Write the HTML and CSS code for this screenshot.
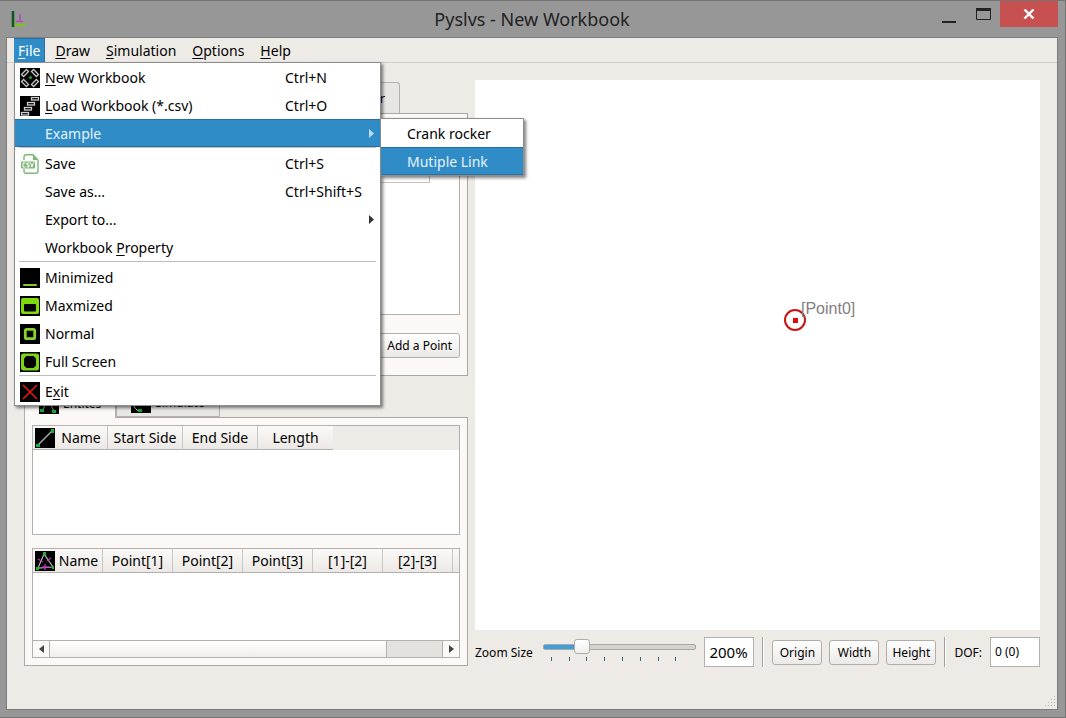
FILE: index.html
```html
<!DOCTYPE html>
<html lang="en">
<head>
<meta charset="utf-8">
<title>Pyslvs - New Workbook</title>
<link rel="stylesheet" href="styles.css">
</head>
<body>
<div class="window">
  <header class="titlebar">
    <svg class="app-icon" width="18" height="18" viewBox="0 0 18 18"><path d="M2 15H15" stroke="#7fc41c" stroke-width="2.4"/><path d="M3 1V17" stroke="#0f5a1c" stroke-width="2.6"/><path d="M10 4V11M6 11.5H13" stroke="#b04fae" stroke-width="1.6"/></svg>
    <h1 class="title">Pyslvs - New Workbook</h1>
    <div class="window-buttons">
      <button class="win-btn" aria-label="Minimize"><svg width="14" height="18"><path d="M0 17H14" stroke="#222" stroke-width="2"/></svg></button>
      <button class="win-btn" aria-label="Maximize"><svg width="15" height="12"><path d="M.5 0V11.5H14.500V0" fill="none" stroke="#222"/><path d="M0 1.500H15" stroke="#222" stroke-width="3"/></svg></button>
      <button class="win-btn win-close" aria-label="Close"><svg width="12" height="10"><path d="M1.500 .5L10.500 9.500M10.500 .5L1.500 9.500" stroke="#fff" stroke-width="2.400"/></svg></button>
    </div>
  </header>

  <div class="client">
    <nav class="menubar">
      <div class="menu-root">
        <button class="menu-title open"><u>F</u>ile</button>
        <div class="menu file-menu">
          <button class="item"><svg class="ico" viewBox="0 0 20 20"><rect width="20" height="20"/><g fill="none" stroke="#c4c4c4" stroke-width="1.300"><rect x="-3.500" y="-1.500" width="7" height="3" transform="translate(5 5) rotate(-45)"/><rect x="-3.500" y="-1.500" width="7" height="3" transform="translate(15 5) rotate(45)"/><rect x="-3.500" y="-1.500" width="7" height="3" transform="translate(5 15) rotate(45)"/><rect x="-3.500" y="-1.500" width="7" height="3" transform="translate(15 15) rotate(-45)"/></g><circle cx="10.500" cy="9.500" r="1.500" fill="#1ca52c"/></svg><span><u>N</u>ew Workbook</span><kbd>Ctrl+N</kbd></button>
          <button class="item"><svg class="ico" viewBox="0 0 20 20"><rect width="20" height="20"/><g fill="none" stroke="#d0d0d0" stroke-width="1.300"><rect x="11.500" y="1.500" width="7" height="2.500"/><rect x="7.500" y="6.500" width="7" height="2.500"/><rect x="4.500" y="11.500" width="7" height="2.500"/><rect x="1.500" y="16.500" width="7" height="2.500"/></g></svg><span><u>L</u>oad Workbook (*.csv)</span><kbd>Ctrl+O</kbd></button>
          <div class="sub-root">
            <button class="item selected"><span class="ico"></span><span>Example</span><svg class="arrow" viewBox="0 0 5 9"><path d="M0 0L5 4.500L0 9Z" fill="currentColor"/></svg></button>
            <div class="menu submenu">
              <button class="item">Crank rocker</button>
              <button class="item selected">Mutiple Link</button>
            </div>
          </div>
          <hr>
          <button class="item"><svg class="ico" viewBox="0 0 20 20"><path d="M4 6V3Q4 .8 6 .8H13L18 6V17Q18 19.200 16 19.200H6Q4 19.200 4 17V15" fill="#fff" stroke="#7fb876" stroke-width="1.400"/><path d="M13 1V6H18Z" fill="#7fb876"/><rect x="1" y="7.500" width="14" height="7" rx="1" fill="#7fb876"/><path d="M5.500 9H3V13H5.500M9.500 9H7V11H9V13H6.800M10.500 8.500L12 13L13.500 8.500" fill="none" stroke="#fff"/></svg><span>Save</span><kbd>Ctrl+S</kbd></button>
          <button class="item"><span class="ico"></span><span>Save as...</span><kbd>Ctrl+Shift+S</kbd></button>
          <button class="item"><span class="ico"></span><span>Export to...</span><svg class="arrow" viewBox="0 0 5 9"><path d="M0 0L5 4.500L0 9Z" fill="currentColor"/></svg></button>
          <button class="item"><span class="ico"></span><span>Workbook <u>P</u>roperty</span></button>
          <hr>
          <button class="item"><svg class="ico" viewBox="0 0 20 20"><rect width="20" height="20"/><path d="M4 17H16" stroke="#86c92c" stroke-width="2.200" stroke-linecap="round"/></svg><span>Minimized</span></button>
          <button class="item"><svg class="ico" viewBox="0 0 20 20"><rect width="20" height="20"/><rect x="1" y="2" width="18" height="16" rx="2" fill="#7ddb0c"/><rect x="4" y="8" width="12" height="7.500" rx="1"/></svg><span>Maxmized</span></button>
          <button class="item"><svg class="ico" viewBox="0 0 20 20"><rect width="20" height="20"/><rect x="5.300" y="5.300" width="9.400" height="9.400" rx="1.500" fill="none" stroke="#86d32c" stroke-width="2.800"/></svg><span>Normal</span></button>
          <button class="item"><svg class="ico" viewBox="0 0 20 20"><rect width="20" height="20"/><rect x="1" y="1.500" width="18" height="17" rx="2.500" fill="#7bd31c"/><path d="M6.500 4H13.500L16 6.500V13.500L13.500 16H6.500L4 13.500V6.500Z"/></svg><span>Full Screen</span></button>
          <hr>
          <button class="item"><svg class="ico" viewBox="0 0 20 20"><rect width="20" height="20"/><path d="M3 3L17 17M17 3L3 17" stroke="#e01818" stroke-width="1.700"/></svg><span>E<u>x</u>it</span></button>
        </div>
      </div>
      <button class="menu-title"><u>D</u>raw</button>
      <button class="menu-title"><u>S</u>imulation</button>
      <button class="menu-title"><u>O</u>ptions</button>
      <button class="menu-title"><u>H</u>elp</button>
    </nav>

    <main class="main">
      <section class="side">
        <div class="tabs upper-tabs"><button class="tab">r</button></div>
        <div class="pane upper-pane">
          <div class="grid-box points"><div class="points-head"></div></div>
          <div class="pane-actions"><button class="btn">Add a Point</button></div>
        </div>

        <div class="tabs lower-tabs">
          <button class="tab active"><svg class="ico" viewBox="0 0 20 20"><rect width="20" height="20"/><path d="M3 17L9 6L15 17" fill="none" stroke="#aaa"/><path d="M1 15h4v3h-4zM13 16h4v3h-4z" fill="#1ca52c"/></svg><span>Entites</span></button>
          <button class="tab"><svg class="ico" viewBox="0 0 20 20"><rect width="20" height="20"/><path d="M2 10Q3 17 9 18" fill="none" stroke="#ccc"/><path d="M7 16h4v3h-4z" fill="#1ca52c"/></svg><span>Simulate</span></button>
        </div>
        <div class="pane lower-pane">
          <div class="grid-box lines">
            <table class="grid grid-lines">
              <thead><tr>
                <th><div class="cell"><svg class="ico" viewBox="0 0 20 20"><rect width="20" height="20"/><path d="M3 17L17 3" stroke="#b5b5b5" stroke-width="1.200"/><path d="M1 16h4v3h-4zM16 1h3v4h-3z" fill="#1cb52c"/></svg><span>Name</span></div></th>
                <th>Start Side</th><th>End Side</th><th>Length</th>
              </tr></thead>
            </table>
          </div>
          <div class="grid-box chains">
            <table class="grid grid-chains">
              <thead><tr>
                <th><div class="cell"><svg class="ico" viewBox="0 0 20 20"><rect width="20" height="20"/><path d="M9 3L3 17L18 16Z" fill="none" stroke="#b5b5b5" stroke-width="1.200"/><path d="M3 8L8 11M12 10L16 7M10 13V19M7 16H14" stroke="#b838b8" stroke-width="1.300"/><path d="M8 1h3v3h-3zM1 16h3v3h-3zM17 15h2v3h-2z" fill="#1cb52c"/></svg><span>Name</span></div></th>
                <th>Point[1]</th><th>Point[2]</th><th>Point[3]</th><th>[1]-[2]</th><th>[2]-[3]</th><th class="rest"></th>
              </tr></thead>
            </table>
            <div class="scrollbar">
              <button class="scroll-btn" aria-label="Scroll left"><svg width="5" height="8"><path d="M5 0L0 4L5 8Z" fill="#444"/></svg></button>
              <div class="scroll-track"><div class="scroll-thumb"></div></div>
              <button class="scroll-btn right" aria-label="Scroll right"><svg width="5" height="8"><path d="M0 0L5 4L0 8Z" fill="#444"/></svg></button>
            </div>
          </div>
        </div>
      </section>

      <section class="view">
        <div class="canvas">
          <div class="point">
            <svg width="22" height="22" viewBox="0 0 22 22"><circle cx="11" cy="11" r="10" fill="none" stroke="#c81414" stroke-width="2"/><rect x="9" y="9" width="5" height="5" fill="#d80c0c"/></svg>
            <span class="point-label">[Point0]</span>
          </div>
        </div>
        <div class="controls">
          <label for="zoom">Zoom Size</label>
          <div class="slider">
            <input id="zoom" type="range" min="0" max="800" value="180">
            <div class="ticks"><i></i><i></i><i></i><i></i><i></i><i></i><i></i><i></i></div>
          </div>
          <input class="field zoom-field" value="200%" aria-label="Zoom value">
          <div class="divider"></div>
          <div class="btn-group">
            <button class="btn">Origin</button>
            <button class="btn">Width</button>
            <button class="btn">Height</button>
          </div>
          <div class="divider"></div>
          <label for="dof">DOF:</label>
          <input class="field dof-field" id="dof" value="0 (0)">
        </div>
      </section>
    </main>
    <svg class="grip" width="12" height="12" viewBox="0 0 12 12" fill="none" stroke="#b4b2ae"><path d="M10.500 0V12" stroke-dasharray="1 2"/><path d="M7.500 3V12" stroke-dasharray="1 2"/><path d="M4.500 6V12" stroke-dasharray="1 2"/><path d="M1.500 9V12" stroke-dasharray="1 2"/></svg>
  </div>
</div>
</body>
</html>
```

FILE: styles.css
```css
* { box-sizing: border-box; }
body {
  margin: 0;
  font: 14px/20px "Noto Sans", "Open Sans", sans-serif;
  color: #000;
}
button, input { font: inherit; color: inherit; margin: 0; }
button { padding: 0; border: 0; background: none; }
svg { display: block; flex: none; }

/* window frame */
.window {
  min-height: 100vh;
  display: flex;
  flex-direction: column;
  padding: 0 7px 7px 6px;
  background: #979797;
  border: 1px solid #747474;
  border-left: 0;
}
.titlebar {
  height: 36px;
  display: grid;
  grid-template-columns: 1fr auto 1fr;
  align-items: center;
}
.app-icon { margin-left: 4px; }
.title { margin: 0; font-size: 18px; line-height: 24px; font-weight: 400; color: #222; }
.window-buttons { align-self: start; justify-self: end; display: flex; }
.win-btn { width: 34px; height: 26px; display: flex; align-items: center; justify-content: center; }
.win-close { width: 58px; background: #c75050; }

/* client area */
.client {
  position: relative;
  flex: 1;
  display: flex;
  flex-direction: column;
  background: #eeebe7;
  border: 1px solid #7c7c7c;
}
.menubar { display: flex; gap: 2px; height: 25px; padding-left: 7px; border-bottom: 1px solid #d2cfcb; }
.menu-root, .sub-root { position: relative; }
.menu-root { margin-right: 1px; }
.menu-title { display: block; height: 25px; padding: 0 5px; }
.menubar > .menu-title { padding: 0 7px; }
.menu-title.open { padding: 0 4px; color: #fff; background: #308cc6; border: 1px solid #2a6f9f; border-width: 1px 1px 0 0; }
.menu-title u, .item u { text-underline-offset: 2px; }

.menu {
  position: absolute;
  z-index: 2;
  display: flex;
  flex-direction: column;
  background: #fff;
  border: 1px solid #8e8e8e;
  box-shadow: 2px 2px 3px rgba(0, 0, 0, .5);
}
.file-menu { top: 24px; left: 0; width: 367px; }
.submenu { top: -1px; left: 365px; width: 144px; }
.item {
  display: flex;
  align-items: center;
  width: 100%;
  height: 28px;
  padding: 1px 5px 0;
  gap: 5px;
  text-align: left;
}
.item.selected { color: #e6f3fb; background: #308cc6; box-shadow: inset 0 1px #2a6f9f, inset 0 -1px #2a6f9f; }
.submenu .item { padding-left: 26px; }
.item kbd { font: inherit; width: 90px; margin-left: auto; }
.item .arrow { width: 5px; height: 9px; margin: 0 1px 0 auto; color: #333; }
.item.selected .arrow { color: #b9dcf3; }
.menu hr { width: 357px; height: 1px; margin: 0 4px 1px; border: 0; background: #bdbdbd; }
.ico { width: 20px; height: 20px; flex: none; }

/* body columns */
.main {
  flex: 1;
  display: grid;
  grid-template-columns: 444fr 565fr;
  gap: 7px;
  padding: 17px 17px 42px;
}
.side { display: flex; flex-direction: column; min-width: 0; padding: 2px 0 1px; }
.tabs { display: flex; font-size: 13px; }
.tab {
  display: flex;
  align-items: center;
  gap: 4px;
  background: #e8e6e3;
  border: 1px solid #b3b0ad;
  border-bottom: 0;
  border-radius: 3px 3px 0 0;
}
.upper-tabs .tab { width: 376px; height: 31px; justify-content: flex-end; padding-right: 14px; }
.lower-tabs { margin-top: 12px; align-items: flex-start; font-size: 12px; }
.lower-tabs .tab { height: 29px; padding: 0 14px; border-bottom: 1px solid #b3b0ad; }
.lower-tabs .tab.active { height: 30px; background: #fcf8f5; border-bottom: 0; margin-bottom: -1px; z-index: 1; }
.pane { background: #fcf8f5; border: 1px solid #aaa7a4; padding: 7px; display: flex; flex-direction: column; }
.upper-pane { flex: 264; }
.lower-pane { flex: 249; gap: 13px; }
.grid-box { display: flex; flex-direction: column; background: #fff; border: 1px solid #b3b0ad; }
.points { flex: 1; margin-top: 30px; }
.points-head { width: 397px; height: 31px; border: 1px solid #c4c1be; border-width: 0 1px 1px 0; }
.pane-actions { display: flex; justify-content: flex-end; padding: 18px 0 10px; }
.lines, .chains { flex: 1; overflow: hidden; }

.btn {
  height: 25px;
  padding: 1px 7px 0;
  font-size: 12px;
  background: linear-gradient(#fff, #ebe9e7);
  border: 1px solid #b1aeaa;
  border-radius: 3px;
}

/* tables */
.grid { border-collapse: separate; border-spacing: 0; table-layout: fixed; width: 100%; }
.grid th {
  width: 70px;
  height: 24px;
  padding: 1px 0 0;
  font-weight: 400;
  white-space: nowrap;
  background: linear-gradient(#fbf9f7, #ebe8e5);
  border-right: 1px solid #c8c5c2;
  border-bottom: 1px solid #b3b0ad;
}
.grid-lines { width: 300px; }
.grid-lines th { width: 75px; }
.grid-lines th:last-child { border-right: 0; }
.lines { background: linear-gradient(#eeebe7 24px, #fff 24px); }
.grid .rest { width: auto; border-right: 0; }
.cell { display: flex; align-items: center; padding-left: 2px; }
.cell span { flex: 1; text-align: center; }

.scrollbar { display: flex; height: 17px; margin-top: auto; border-top: 1px solid #b3b0ad; background: #fbf9f7; }
.scroll-btn { width: 17px; display: flex; align-items: center; justify-content: center; border-right: 1px solid #b3b0ad; }
.scroll-btn.right { border-right: 0; border-left: 1px solid #b3b0ad; }
.scroll-track { flex: 1; background: #e4e2df; }
.scroll-thumb { width: 86%; height: 100%; background: linear-gradient(#fff, #f0eeeb); border-right: 1px solid #b3b0ad; }

/* drawing area */
.view { display: flex; flex-direction: column; min-width: 0; gap: 7px; }
.canvas { flex: 1; position: relative; background: #fff; }
.point { position: absolute; left: 309px; top: 229px; }
.point-label { position: absolute; left: 17px; top: -10px; font: 16px/20px "Liberation Sans", Arial, sans-serif; color: #808080; }

.controls { display: flex; align-items: center; gap: 8px; height: 30px; font-size: 12px; }
.controls label { flex: none; padding-top: 1px; }
.slider { flex: 1; min-width: 0; height: 28px; margin-left: 2px; }
.slider input { display: block; appearance: none; width: 100%; height: 18px; background: none; }
.slider input::-webkit-slider-runnable-track {
  height: 6px;
  border: 1px solid #aaa8a4;
  border-radius: 2px;
  background: linear-gradient(90deg, #3f9fdd 25%, #d6d3cf 25%);
}
.slider input::-webkit-slider-thumb {
  appearance: none;
  width: 16px;
  height: 15px;
  margin-top: -6px;
  border: 1px solid #b1aeaa;
  border-radius: 3px;
  background: linear-gradient(#fff, #f1efed);
}
.ticks { display: flex; justify-content: space-between; margin-top: 1px; padding: 0 20px 0 8px; }
.ticks i { width: 1px; height: 4px; background: #3c6478; }
.field { height: 30px; width: 50px; padding: 0 4px; background: #fff; border: 1px solid #b3b0ad; }
.zoom-field { font-size: 15px; padding-bottom: 1px; }
.dof-field { font-size: 12px; padding-bottom: 2px; }
.divider { width: 2px; height: 30px; border-left: 1px solid #a19e9b; border-right: 1px solid #fff; }
.btn-group { display: flex; gap: 7px; }
.btn-group .btn { width: 50px; padding: 1px 0 0; }
.grip { position: absolute; right: 1px; bottom: 1px; }
```
